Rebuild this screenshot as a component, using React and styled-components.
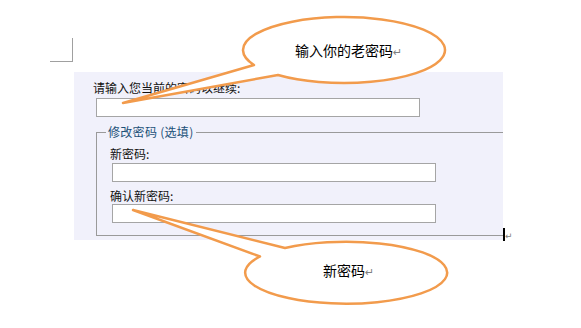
import React from 'react'
import styled, { createGlobalStyle } from 'styled-components'

const Global = createGlobalStyle`
  html, body { margin: 0; padding: 0; background: #fff; }
  body { font-family: "Noto Sans CJK SC", "DejaVu Sans", sans-serif; }
`

const Page = styled.div`
  position: relative;
  width: 581px;
  height: 328px;
  padding: 38px 0 0 50px;
  box-sizing: border-box;
  overflow: hidden;
`

const Corner = styled.div`
  width: 23px;
  height: 24px;
  border-right: 1px solid #a0a0a0;
  border-bottom: 1px solid #a0a0a0;
  box-sizing: border-box;
`

const Row = styled.div`
  display: flex;
  align-items: flex-end;
  margin: 10px 0 0 24px;
`

const Panel = styled.div`
  width: 429px;
  height: 168px;
  background: #f1f1fb;
  padding-top: 8px;
  box-sizing: border-box;
`

const Label = styled.div`
  font-size: 12px;
  line-height: 16px;
  color: #111;
  margin: ${p => p.$top || 0}px 0 0 ${p => p.$left}px;
`

const Input = styled.div`
  width: 324px;
  height: 19px;
  box-sizing: border-box;
  background: #fff;
  border: 1px solid #a5a5a5;
  margin: ${p => p.$top || 0}px 0 0 ${p => p.$left}px;
`

const Group = styled.fieldset`
  margin: 8px 0 0 22px;
  padding: 0 0 12px 9px;
  border: 1px solid #9a9a9a;
  border-right: none;
  min-width: 0;
`

const Legend = styled.legend`
  font-size: 12px;
  line-height: 14px;
  padding: 0 2px;
  color: #1b5078;
  letter-spacing: 0.3px;
`

const EndMark = styled.div`
  display: flex;
  align-items: flex-end;
  height: 13px;
  margin: 0 0 -1px 0;
`

const Cursor = styled.span`
  width: 2px;
  height: 13px;
  background: #000;
`

const Para = styled.span`
  font-family: "DejaVu Sans", sans-serif;
  font-size: ${p => p.$size || 9}px;
  line-height: 10px;
  color: #808080;
`

const Overlay = styled.svg`
  position: absolute;
  left: 0;
  top: 0;
`

const Bubble = styled.div`
  position: absolute;
  left: ${p => p.$x}px;
  top: ${p => p.$y}px;
  font-size: 14px;
  line-height: 16px;
  color: #000;
  white-space: nowrap;
`

export default function App() {
  return (
    <>
      <Global />
      <Page>
        <Corner />
        <Row>
          <Panel>
            <Label $left={19}>请输入您当前的密码以继续:</Label>
            <Input $left={22} $top={2} />
            <Group>
              <Legend>修改密码 (选填)</Legend>
              <Label $left={4} $top={7}>新密码:</Label>
              <Input $left={6} $top={1} />
              <Label $left={4} $top={6}>确认新密码:</Label>
              <Input $left={6} $top={0} />
            </Group>
          </Panel>
          <EndMark>
            <Cursor />
            <Para>↵</Para>
          </EndMark>
        </Row>

        <Overlay width="581" height="328">
          <path
            d="M 254 65 L 123 103 L 278 75 A 101 33 0 1 0 254 65 Z"
            fill="#fff"
            stroke="#f29b4c"
            strokeWidth="2.5"
            strokeLinejoin="round"
          />
          <path
            d="M 285 248 L 133 210 L 260 256.5 A 101 31 0 1 0 285 248 Z"
            fill="#fff"
            stroke="#f29b4c"
            strokeWidth="2.5"
            strokeLinejoin="round"
          />
        </Overlay>
        <Bubble $x={295} $y={42}>输入你的老密码<Para $size={11}>↵</Para></Bubble>
        <Bubble $x={323} $y={262}>新密码<Para $size={11}>↵</Para></Bubble>
      </Page>
    </>
  )
}
